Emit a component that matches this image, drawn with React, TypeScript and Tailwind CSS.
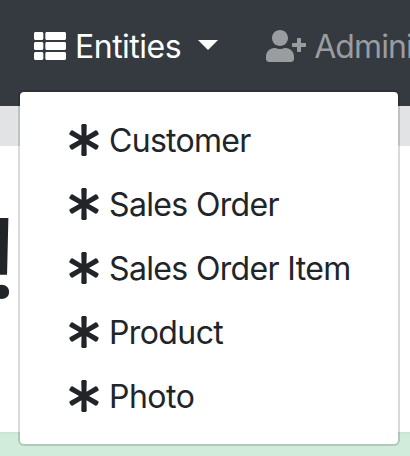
import { FaAsterisk, FaThList, FaUserPlus } from 'react-icons/fa'

const entities = [
  { name: 'Customer', tracking: 'tracking-[-0.7px]' },
  { name: 'Sales Order', tracking: 'tracking-[-0.65px]' },
  { name: 'Sales Order Item', tracking: 'tracking-[-0.65px]' },
  { name: 'Product', tracking: 'tracking-[-0.6px]' },
  { name: 'Photo', tracking: 'tracking-[-0.5px]' },
]

function EntitiesMenu() {
  return (
    <ul className="absolute top-[90px] left-[18px] w-[382px] rounded-[6px] border-2 border-black/15 bg-white bg-clip-padding py-4">
      {entities.map(({ name, tracking }) => (
        <li key={name} className="flex h-16 items-center gap-[9px] pl-12">
          <FaAsterisk className="size-8 shrink-0" />
          <span className={`pt-px whitespace-nowrap ${tracking}`}>{name}</span>
        </li>
      ))}
    </ul>
  )
}

export default function App() {
  return (
    <div className="relative flex h-[456px] w-full flex-col overflow-hidden bg-white font-['Inter',sans-serif] text-[32px] leading-[48px] text-[#212529]">
      <nav className="flex h-[106px] shrink-0 items-start bg-[#343a40] pt-[20px] pl-[34px] whitespace-nowrap">
        <button type="button" className="flex items-center text-white">
          <FaThList className="size-8 shrink-0" />
          <span className="ml-[9px] pt-[3px] tracking-[-0.5px]">Entities</span>
          <span className="mb-px ml-[17px] border-x-[10px] border-t-[10px] border-x-transparent border-t-white" />
        </button>
        <button
          type="button"
          className="ml-12 flex items-center text-[#9a9da0]"
        >
          <FaUserPlus className="h-8 w-10 shrink-0" />
          <span className="ml-[8px] pt-[3px] tracking-[-0.9px]">Admini</span>
        </button>
      </nav>
      <div className="h-10 shrink-0 bg-[#e2e3e5]" />
      <main className="flex flex-1 flex-col pt-[46px]">
        <h1 className="-ml-[14px] font-['Roboto',sans-serif] text-[114px] leading-[134px] font-medium">
          !
        </h1>
      </main>
      <div className="h-6 shrink-0 border-t-2 border-[#c8e7d2] bg-[#d1ecdb]" />
      <EntitiesMenu />
    </div>
  )
}
